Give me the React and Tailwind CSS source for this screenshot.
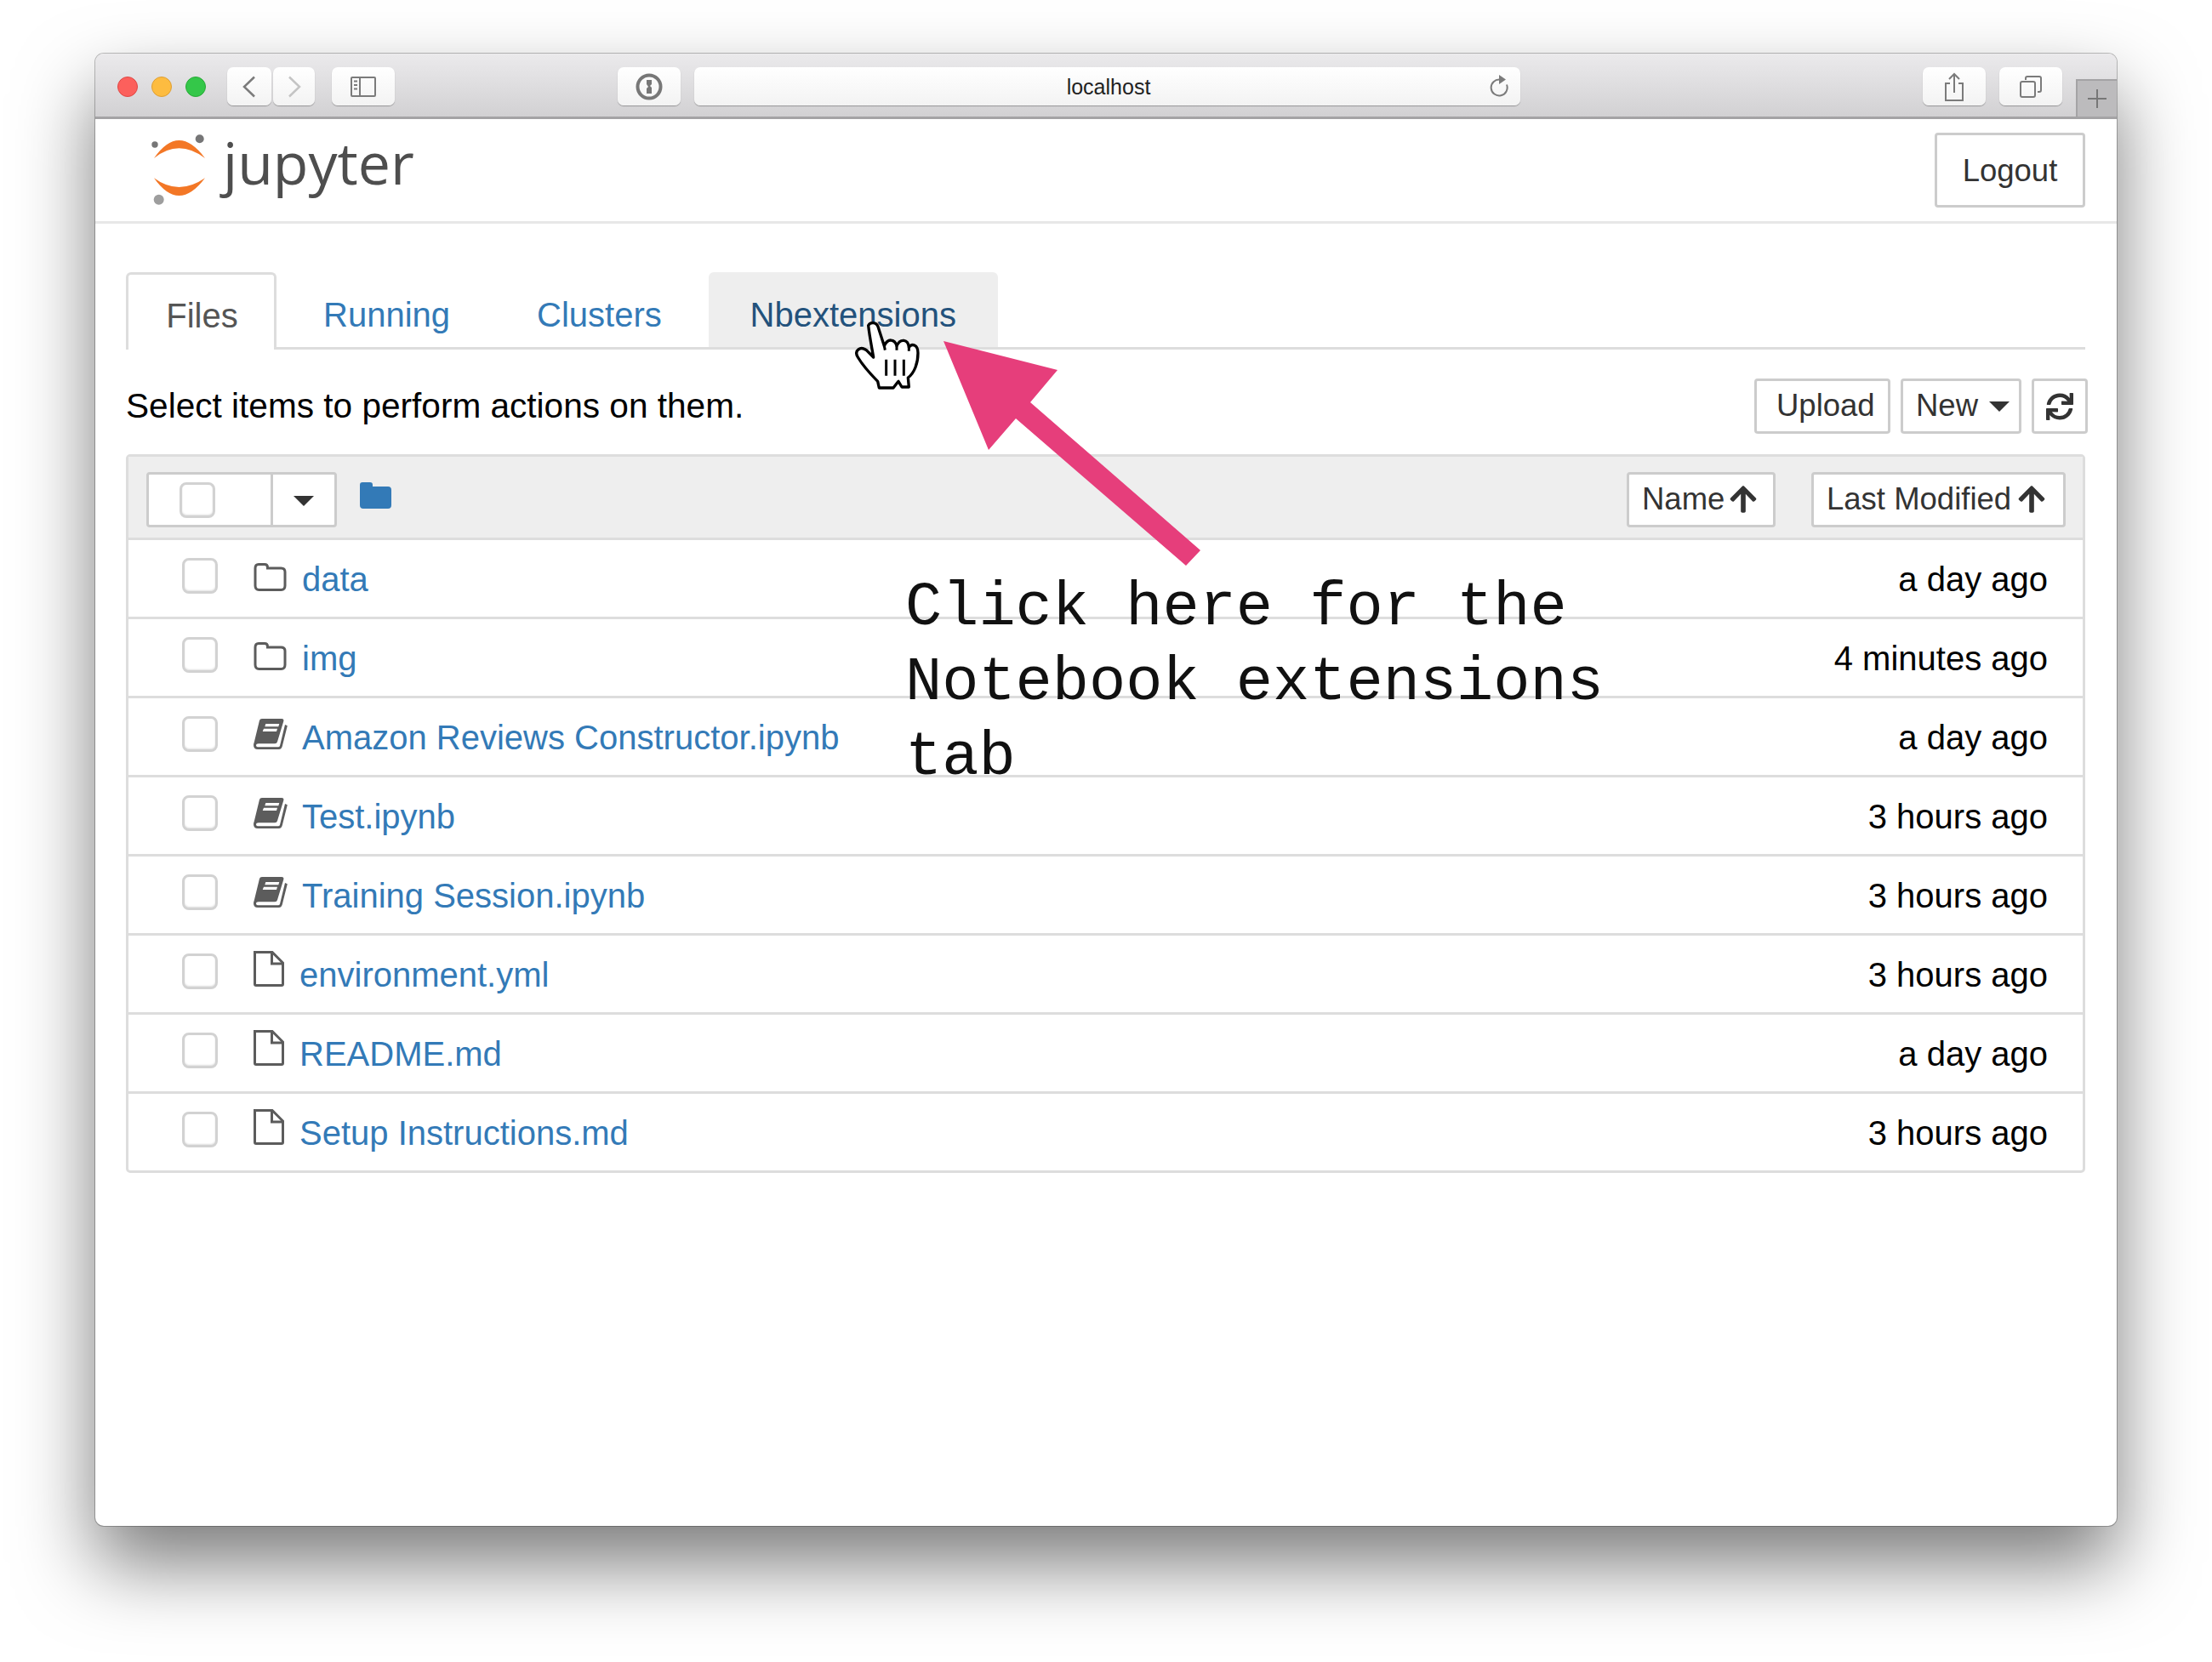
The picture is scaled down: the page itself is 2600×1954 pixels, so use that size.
import { FaSync, FaArrowUp } from 'react-icons/fa';

const files = [
  { name: 'data', type: 'folder', modified: 'a day ago' },
  { name: 'img', type: 'folder', modified: '4 minutes ago' },
  { name: 'Amazon Reviews Constructor.ipynb', type: 'book', modified: 'a day ago' },
  { name: 'Test.ipynb', type: 'book', modified: '3 hours ago' },
  { name: 'Training Session.ipynb', type: 'book', modified: '3 hours ago' },
  { name: 'environment.yml', type: 'file', modified: '3 hours ago' },
  { name: 'README.md', type: 'file', modified: 'a day ago' },
  { name: 'Setup Instructions.md', type: 'file', modified: '3 hours ago' },
];

const FolderOutline = () => (
  <svg width="39" height="33" viewBox="0 0 39 33" className="mb-[3px]" fill="none" stroke="#5c5c5c" strokeWidth="3">
    <path d="M6 1.500h7q3.500 0 3.500 3.500v1h16q4.500 0 4.500 4.500v16q0 5-4.500 5h-26q-4.500 0-4.500-5v-20.500q0-4.500 4-4.500z" />
  </svg>
);

const BookIcon = () => (
  <svg width="40" height="37" viewBox="0 0 40 37" className="mb-[6px]">
    <path d="M10 0h23q3 0 2.300 3L28 27q-.5 2.300-3 2.300H6q-3 0-3 2 0 2 3 2h23q1.500 0 2-1.500L37 7l2.800 1.300-6 24q-.8 3.700-4 3.700H5q-5 0-5-5 0-1.500 .8-3.500L7 2q.5-2 3-2z" fill="#5c5c5c" />
    <path d="M14.300 6h16l-1 3.300h-16zM12 11.700h16l-1 3.300H10.700z" fill="#fff" />
  </svg>
);

const FileOutline = () => (
  <svg width="36" height="42" viewBox="0 0 36 42" className="mb-[12px]" fill="none" stroke="#5c5c5c" strokeWidth="3">
    <path d="M1.500 1.500h20.500l12.500 12.500v25q0 1.500-1.500 1.500H3q-1.500 0-1.500-1.500z" />
    <path d="M21.500 2v13h13" />
  </svg>
);

const Checkbox = ({ className }) => (
  <div className={`w-[42px] h-[42px] rounded-[8px] border-[3px] border-[#d2d2d2] bg-white shadow-[inset_0_-1px_2px_rgba(0,0,0,0.12)] ${className}`} />
);

const Caret = ({ className }) => (
  <svg width="24" height="12" viewBox="0 0 24 12" className={className}>
    <path d="M0 0h24L12 12z" fill="#333" />
  </svg>
);

const SafariButton = ({ className, children }) => (
  <div className={`h-[45px] mt-[16px] flex items-center justify-center bg-gradient-to-b from-white to-[#f3f3f3] rounded-[7px] shadow-[0_1px_1px_rgba(0,0,0,0.3)] ${className}`}>
    {children}
  </div>
);

const Toolbar = () => (
  <div className="flex items-start h-[77px] border-b-[3px] border-[#a4a3a5] rounded-t-[10px] bg-gradient-to-b from-[#ebeaec] to-[#d2d1d3]">
    <div className="flex gap-[16px] mt-[27px] ml-[26px]">
      <div className="w-[24px] h-[24px] rounded-full bg-[#fc605c] border border-[#df4744]" />
      <div className="w-[24px] h-[24px] rounded-full bg-[#fdbc40] border border-[#de9f34]" />
      <div className="w-[24px] h-[24px] rounded-full bg-[#34c749] border border-[#27aa35]" />
    </div>
    <SafariButton className="w-[52px] ml-[25px]">
      <svg width="16" height="26" viewBox="0 0 16 26" fill="none" stroke="#7b7b7b" strokeWidth="2.500"><path d="M14 1.500 2 13l12 11.500" /></svg>
    </SafariButton>
    <SafariButton className="w-[49px] ml-[2px]">
      <svg width="16" height="26" viewBox="0 0 16 26" fill="none" stroke="#c4c4c4" strokeWidth="2.500"><path d="M2 1.500 14 13 2 24.500" /></svg>
    </SafariButton>
    <SafariButton className="w-[74px] ml-[20px]">
      <svg width="30" height="24" viewBox="0 0 30 24" fill="none" stroke="#7b7b7b" strokeWidth="2"><rect x="1" y="1" width="28" height="22" rx="1" /><path d="M11 1v22" /><path d="M4 5.500h4M4 10h4M4 14.500h4" strokeWidth="2" /></svg>
    </SafariButton>
    <SafariButton className="w-[74px] ml-[262px]">
      <svg width="32" height="32" viewBox="0 0 32 32" fill="none"><circle cx="16" cy="16" r="13.500" stroke="#777" strokeWidth="4" /><path d="M13 8h6v5l-2 2 2 2v7h-6v-6l2-2-2-3z" fill="#777" /></svg>
    </SafariButton>
    <SafariButton className="w-[971px] ml-[16px] relative">
      <span className="text-[25px] text-[#222] pt-[2px] ml-[3px]">localhost</span>
      <svg width="24" height="28" viewBox="0 0 24 28" fill="none" className="absolute right-[14px] top-[8px]"><path d="M14 6.500a9.500 9.500 0 1 0 8 6" stroke="#7b7b7b" strokeWidth="2" /><path d="M13 1l8 5.500-8 5.500z" fill="#7b7b7b" /></svg>
    </SafariButton>
    <SafariButton className="w-[74px] ml-[473px]">
      <svg width="24" height="34" viewBox="0 0 24 34" fill="none" stroke="#7b7b7b" strokeWidth="2"><path d="M7 13H2v20h20V13h-5M12 24V2M6 8l6-6 6 6" /></svg>
    </SafariButton>
    <SafariButton className="w-[74px] ml-[16px]">
      <svg width="26" height="26" viewBox="0 0 26 26" fill="none" stroke="#7b7b7b" strokeWidth="2"><rect x="1" y="7" width="17" height="18" rx="2" /><path d="M7 5V3q0-2 2-2h14q2 0 2 2v14q0 2-2 2h-2" /></svg>
    </SafariButton>
    <div className="w-[48px] h-[44px] mt-[30px] ml-[16px] flex items-center justify-center bg-[#bcbbbd] border-l-[2px] border-t-[2px] border-[#a4a3a5]">
      <svg width="24" height="24" viewBox="0 0 24 24" fill="none" stroke="#777" strokeWidth="2"><path d="M12 1v22M1 12h22" /></svg>
    </div>
  </div>
);

const JupyterLogo = () => (
  <svg width="70" height="90" viewBox="0 0 70 90">
    <path d="M5 31Q34-11 65 31Q34 7.600 5 31z" fill="#f37726" />
    <path d="M5 54.300Q34 95.700 65 54.300Q34 75.700 5 54.300z" fill="#f37726" />
    <circle cx="58.700" cy="8.300" r="5" fill="#767677" />
    <circle cx="6" cy="15" r="3.700" fill="#767677" />
    <circle cx="10.700" cy="79.700" r="6" fill="#9e9e9e" />
  </svg>
);

const HeaderBar = () => (
  <div className="flex items-start h-[123px] border-b-[3px] border-[#e7e7e7]">
    <div className="ml-[64px] mt-[15px]"><JupyterLogo /></div>
    <span className="ml-[16px] mt-[6px] text-[68px] leading-[90px] text-[#4e4e4e] font-['Open_Sans',sans-serif]">jupyter</span>
    <button className="ml-auto mr-[37px] mt-[16px] w-[177px] h-[88px] pt-[2px] border-[3px] border-[#ccc] rounded-[4px] text-[36.500px] text-[#333]">Logout</button>
  </div>
);

const Tabs = () => (
  <div className="flex items-stretch h-[91px] mt-[57px] border-b-[3px] border-[#ddd]">
    <div className="relative w-[177px] h-[91px] pt-[8px] pl-[2px] flex items-center justify-center border-[3px] border-b-0 border-[#ddd] rounded-t-[6px] bg-white text-[#555] text-[40px]">Files</div>
    <div className="ml-[5px] px-[50px] pt-[12px] flex items-center text-[#337ab7] text-[40px]">Running</div>
    <div className="ml-[2px] px-[50px] pt-[12px] flex items-center text-[#337ab7] text-[40px]">Clusters</div>
    <div className="ml-[5px] w-[340px] h-[88px] pt-[12px] flex items-center justify-center rounded-t-[6px] bg-[#eee] text-[#23527c] text-[40px]">Nbextensions</div>
  </div>
);

const Btn = ({ className, children }) => (
  <button className={`flex items-center border-[3px] border-[#ccc] rounded-[4px] bg-white text-[36.500px] text-[#333] ${className}`}>{children}</button>
);

const ActionRow = () => (
  <div className="flex items-center justify-between h-[65px] mt-[34px] -mr-[3px]">
    <span className="text-[40.600px] text-black">Select items to perform actions on them.</span>
    <div className="flex gap-[12px]">
      <Btn className="w-[160px] h-[65px] pl-[23px]">Upload</Btn>
      <Btn className="w-[142px] h-[65px] pl-[15px]">New<Caret className="ml-[13px]" /></Btn>
      <Btn className="w-[66px] h-[65px] justify-center"><FaSync size={32} color="#333" /></Btn>
    </div>
  </div>
);

const ListHeader = () => (
  <div className="flex items-center h-[98px] pl-[21px] pr-[20px] pt-[5px] bg-[#eee] border-b-[3px] border-[#ddd]">
    <div className="flex h-[65px] w-[224px] border-[3px] border-[#ccc] rounded-[4px] bg-white">
      <div className="flex items-center justify-center w-[146px] pt-[2px] border-r-[3px] border-[#ccc] pr-[29px]">
        <Checkbox />
      </div>
      <div className="flex items-center justify-center flex-1 pt-[4px]"><Caret /></div>
    </div>
    <svg width="37" height="31" viewBox="0 0 37 31" className="ml-[27px] mb-[9px]">
      <path d="M3 0h9q3 0 3 3v2h18q4 0 4 4v18q0 4-4 4H4q-4 0-4-4V3q0-3 3-3z" fill="#337ab7" />
    </svg>
    <Btn className="ml-auto w-[175px] h-[65px] pl-[15px]">Name<FaArrowUp size={36} className="ml-[4px]" /></Btn>
    <Btn className="ml-[42px] w-[299px] h-[65px] pl-[15px]">Last Modified<FaArrowUp size={36} className="ml-[6px]" /></Btn>
  </div>
);

const Row = ({ file, last }) => (
  <div className={`flex items-center ${last ? 'h-[90px]' : 'h-[93px] border-b-[3px] border-[#ddd]'}`}>
    <Checkbox className="ml-[63px] mb-[7px]" />
    <div className={`ml-[42px] flex items-center ${file.type === 'file' ? 'w-[54px]' : 'w-[57px]'}`}>
      {file.type === 'folder' && <FolderOutline />}
      {file.type === 'book' && <BookIcon />}
      {file.type === 'file' && <FileOutline />}
    </div>
    <span className="pt-[1px] text-[40px] text-[#337ab7]">{file.name}</span>
    <span className="ml-auto mr-[41px] pt-[1px] text-[40px] text-black">{file.modified}</span>
  </div>
);

export default function App() {
  return (
    <div className="relative w-[2600px] h-[1954px] overflow-hidden bg-white font-['Liberation_Sans',Arial,sans-serif]">
      <div className="relative ml-[112px] mt-[63px] w-[2376px] h-[1731px] rounded-[10px] bg-white shadow-[0_0_0_1px_rgba(0,0,0,0.25),0_45px_90px_rgba(0,0,0,0.52)]">
        <Toolbar />
        <HeaderBar />
        <div className="pl-[36px] pr-[37px]">
          <Tabs />
          <ActionRow />
          <div className="mt-[24px] border-[3px] border-[#ddd] rounded-[5px]">
            <ListHeader />
            {files.map((file, i) => (
              <Row key={file.name} file={file} last={i === files.length - 1} />
            ))}
          </div>
        </div>

        {/* annotation drawn over the page */}
        <svg width="320" height="280" viewBox="0 0 320 280" className="absolute left-[990px] top-[330px]">
          <path d="M7 8 141 42 109 80 309 254 292 272 92 99 60 136z" fill="#e63e7b" />
        </svg>
        <svg width="120" height="110" viewBox="0 0 360 330" className="absolute left-[868px] top-[297px]">
          <path d="M122 68C128 55 150 55 156 72L178 140C190 112 215 115 222 140C235 112 262 116 265 145C275 130 297 135 297 165C297 200 285 235 262 252L265 285H240L228 265L210 288H160L155 265C130 240 100 205 85 180C70 155 95 140 115 155L140 180C135 150 125 100 122 68Z" fill="#fff" stroke="#000" strokeWidth="10" strokeLinejoin="round" />
          <path d="M185 188V245M216 188V245M247 188V245M178 140L181 155M222 140V155M265 145V158" fill="none" stroke="#000" strokeWidth="9" />
        </svg>
        <div className="absolute left-[952px] top-[608px] text-[72px] leading-[88px] text-[#111] whitespace-pre font-['Liberation_Mono',monospace]">
          {'Click here for the\nNotebook extensions\ntab'}
        </div>
      </div>
    </div>
  );
}
